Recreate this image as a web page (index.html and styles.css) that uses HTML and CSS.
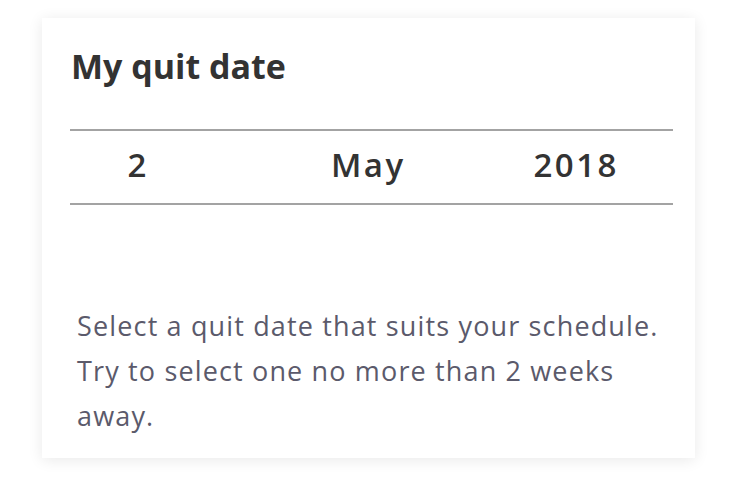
FILE: index.html
```html
<!DOCTYPE html>
<html>
<head>
<meta charset="utf-8">
<link rel="stylesheet" href="styles.css">
</head>
<body>
<div class="card">
  <h1 class="title">My quit date</h1>
  <div class="picker">
    <div class="col col-day">2</div>
    <div class="col col-month">May</div>
    <div class="col col-year">2018</div>
  </div>
  <p class="hint">Select a quit date that suits your schedule. Try to select one no more than 2 weeks away.</p>
</div>
</body>
</html>
```
FILE: styles.css
```css
html, body {
  margin: 0;
  padding: 0;
  background: #ffffff;
}
body {
  padding: 18px 41px 19px 42px;
  font-family: "Open Sans", Lato, sans-serif;
}
.card {
  background: #fff;
  box-shadow: 0 2px 14px rgba(0,0,0,0.09);
  padding: 29px 22px 24px 28px;
  height: 440px;
  box-sizing: border-box;
}
.title {
  margin: 0 0 0 1px;
  font-size: 34px;
  line-height: 38px;
  font-weight: 700;
  color: #333333;
}
.picker {
  margin-top: 44px;
  border-top: 2px solid #a3a3a3;
  border-bottom: 2px solid #a3a3a3;
  height: 72px;
  display: grid;
  grid-template-columns: 134px 326px 90px;
  align-items: center;
}
.col {
  text-align: center;
  font-size: 33px;
  font-weight: 600;
  letter-spacing: 2.5px;
  padding-left: 2.5px;
  padding-bottom: 6px;
  color: #333333;
}
.hint {
  margin: 98px 0 0 7px;
  font-size: 27px;
  line-height: 45px;
  color: #5b5a6b;
  letter-spacing: 1.15px;
}
```
